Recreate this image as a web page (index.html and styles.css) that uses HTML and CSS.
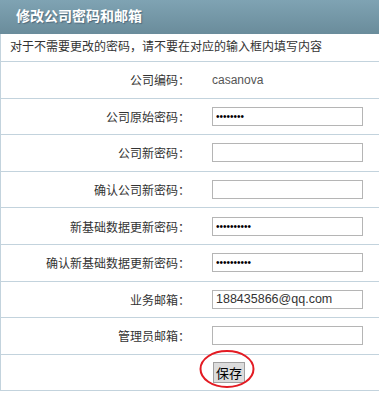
FILE: index.html
```html
<!DOCTYPE html>
<html lang="zh-CN">
<head>
    <meta charset="UTF-8">
    <meta name="viewport" content="width=device-width, initial-scale=1.0">
    <title>修改公司密码和邮箱</title>
    <link rel="stylesheet" href="styles.css">
</head>
<body>
    <div class="panel">
        <div class="panel-title">修改公司密码和邮箱</div>
        <div class="panel-tip">对于不需要更改的密码，请不要在对应的输入框内填写内容</div>

        <form class="pwd-form">
            <table class="form-table">
                <tr>
                    <td class="label">公司编码：</td>
                    <td class="value"><span class="code">casanova</span></td>
                </tr>
                <tr>
                    <td class="label">公司原始密码：</td>
                    <td class="value"><input type="password" class="field pwd" value="12345678"></td>
                </tr>
                <tr>
                    <td class="label">公司新密码：</td>
                    <td class="value"><input type="password" class="field pwd"></td>
                </tr>
                <tr>
                    <td class="label">确认公司新密码：</td>
                    <td class="value"><input type="password" class="field pwd"></td>
                </tr>
                <tr>
                    <td class="label">新基础数据更新密码：</td>
                    <td class="value"><input type="password" class="field pwd" value="1234567890"></td>
                </tr>
                <tr>
                    <td class="label">确认新基础数据更新密码：</td>
                    <td class="value"><input type="password" class="field pwd" value="1234567890"></td>
                </tr>
                <tr>
                    <td class="label">业务邮箱：</td>
                    <td class="value"><input type="text" class="field" value="188435866@qq.com"></td>
                </tr>
                <tr>
                    <td class="label">管理员邮箱：</td>
                    <td class="value"><input type="text" class="field"></td>
                </tr>
                <tr>
                    <td class="label"></td>
                    <td class="value">
                        <span class="btn-wrap">
                            <button type="submit" class="btn-save">保存</button>
                            <!-- red mark drawn over the button -->
                            <svg class="mark" width="58" height="40" viewBox="0 0 58 40">
                                <ellipse cx="29" cy="20" rx="26.5" ry="18" fill="none" stroke="#e31b23" stroke-width="2"/>
                            </svg>
                        </span>
                    </td>
                </tr>
            </table>
        </form>
    </div>
</body>
</html>
```

FILE: styles.css
```css
/* General Styles */
body {
    margin: 0;
    font-family: "Liberation Sans", "Noto Sans CJK SC", sans-serif;
    font-size: 12px;
    color: #333;
    background: #fff;
    overflow: hidden;
}

.panel {
    border-left: 1px solid #c3d3dd;
}

.panel-title {
    height: 34px;
    line-height: 33px;
    padding-left: 16px;
    margin-left: -1px;
    font-size: 14px;
    font-weight: bold;
    color: #fff;
    text-shadow: 1px 1px 1px rgba(60, 80, 100, 0.6);
    background: linear-gradient(#7fa3b3, #6a8c9b);
}

.panel-tip {
    height: 27px;
    line-height: 27px;
    padding-left: 9px;
    border-bottom: 1px solid #c3d3dd;
}

.form-table {
    width: 100%;
    border-collapse: collapse;
}

.form-table td {
    height: 35.6px;
    padding: 0;
    border-bottom: 1px solid #c3d3dd;
}

.label {
    width: 189px;
    padding-right: 10px !important;
    text-align: right;
}

.value {
    padding-left: 12px !important;
}

.code {
    color: #555;
}

.field {
    width: 151px;
    height: 19px;
    box-sizing: border-box;
    margin: 0;
    padding: 0 3px;
    border: 1px solid #b5b5b5;
    font-family: "Liberation Sans", sans-serif;
    font-size: 12.5px;
    color: #333;
    vertical-align: middle;
}

.field.pwd {
    font-size: 10px;
    color: #000;
}

.btn-wrap {
    position: relative;
    display: inline-block;
}

.btn-save {
    height: 21px;
    padding: 0 2px;
    margin: 0 0 0 1px;
    border: 1px solid #a0a0a0;
    background: #dcdcdc;
    font-family: "Noto Sans CJK SC", sans-serif;
    font-size: 13px;
    line-height: 19px;
    color: #000;
    vertical-align: middle;
}

.mark {
    position: absolute;
    left: -14px;
    top: -13px;
}
```
